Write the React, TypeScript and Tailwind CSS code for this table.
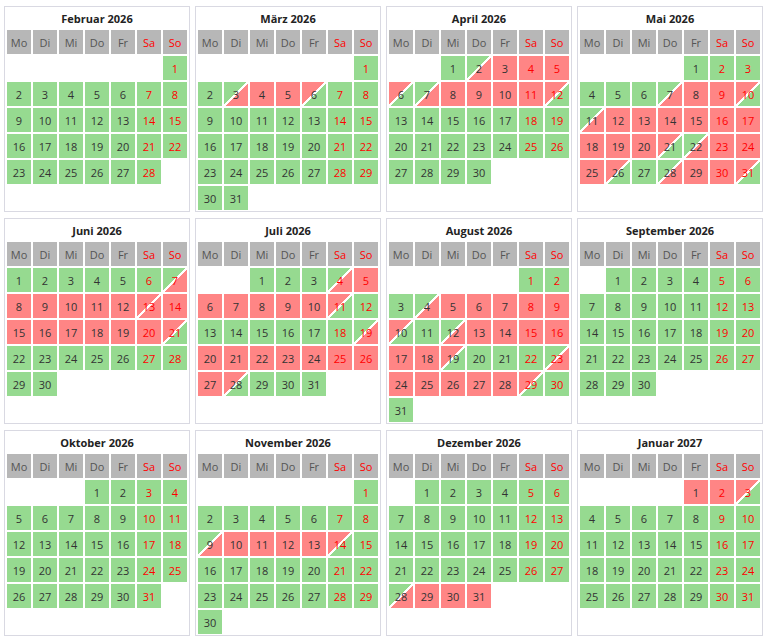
import React from "react";

// Belegungsplan: Aufenthalte als [Anreise, Abreise)
const stays: [string, string][] = [
  ["2026-03-03", "2026-03-06"],
  ["2026-04-02", "2026-04-06"],
  ["2026-04-07", "2026-04-12"],
  ["2026-05-07", "2026-05-10"],
  ["2026-05-11", "2026-05-21"],
  ["2026-05-22", "2026-05-26"],
  ["2026-05-28", "2026-05-31"],
  ["2026-06-07", "2026-06-13"],
  ["2026-06-13", "2026-06-21"],
  ["2026-07-04", "2026-07-11"],
  ["2026-07-19", "2026-07-28"],
  ["2026-08-04", "2026-08-10"],
  ["2026-08-12", "2026-08-19"],
  ["2026-08-23", "2026-08-29"],
  ["2026-11-09", "2026-11-14"],
  ["2026-12-28", "2027-01-03"],
];

const MONTH_NAMES = [
  "Januar", "Februar", "März", "April", "Mai", "Juni",
  "Juli", "August", "September", "Oktober", "November", "Dezember",
];
const WEEKDAYS = ["Mo", "Di", "Mi", "Do", "Fr", "Sa", "So"];

type DayState = "free" | "booked" | "arrival" | "departure" | "change";

// Hintergrund je Zustand
const STATE_BG: Record<DayState, string> = {
  free: "bg-[#96da90]",
  booked: "bg-[#ff8585]",
  arrival:
    "bg-[linear-gradient(to_bottom_right,#96da90_46%,#ffffff_46%,#ffffff_54%,#ff8585_54%)]",
  departure:
    "bg-[linear-gradient(to_bottom_right,#ff8585_46%,#ffffff_46%,#ffffff_54%,#96da90_54%)]",
  change:
    "bg-[linear-gradient(to_bottom_right,#ff8585_46%,#ffffff_46%,#ffffff_54%,#ff8585_54%)]",
};

function iso(y: number, m: number, d: number) {
  const dt = new Date(y, m, d);
  const mm = String(dt.getMonth() + 1).padStart(2, "0");
  const dd = String(dt.getDate()).padStart(2, "0");
  return `${dt.getFullYear()}-${mm}-${dd}`;
}

function getState(y: number, m: number, d: number): DayState {
  const day = iso(y, m, d);
  const isStart = stays.some(([s]) => s === day);
  const isEnd = stays.some(([, e]) => e === day);
  const nightBooked = stays.some(([s, e]) => day >= s && day < e);
  const morningBooked = stays.some(([s, e]) => day > s && day <= e);
  if (isStart && isEnd) return "change";
  if (nightBooked && morningBooked) return "booked";
  if (nightBooked) return "arrival";
  if (morningBooked) return "departure";
  return "free";
}

function MonthCard({ year, month }: { year: number; month: number }) {
  const offset = (new Date(year, month, 1).getDay() + 6) % 7;
  const days = new Date(year, month + 1, 0).getDate();
  const cells: (number | null)[] = [
    ...Array.from({ length: offset }, () => null),
    ...Array.from({ length: days }, (_, i) => i + 1),
  ];

  return (
    <div className="h-[206px] w-[186px] border border-[#d9d9e2] bg-white px-[2px]">
      <div className="flex h-[23px] items-center justify-center pt-[2px] text-[11px] font-bold text-[#222]">
        {MONTH_NAMES[month]} {year}
      </div>
      <div className="grid grid-cols-[repeat(7,24px)] auto-rows-[24px] gap-[2px] text-[11px] leading-none">
        {WEEKDAYS.map((w, i) => (
          <div
            key={w}
            className={`flex items-center justify-center bg-[#b7b7b7] ${
              i >= 5 ? "text-[#f00]" : "text-[#555]"
            }`}
          >
            {w}
          </div>
        ))}
        {cells.map((d, i) => {
          if (d === null) return <div key={`e${i}`} />;
          const weekend = i % 7 >= 5;
          return (
            <div
              key={d}
              className={`flex items-center justify-center ${STATE_BG[getState(year, month, d)]} ${
                weekend ? "text-[#f00]" : "text-[#333]"
              }`}
            >
              {d}
            </div>
          );
        })}
      </div>
    </div>
  );
}

export default function App() {
  const months = Array.from({ length: 12 }, (_, i) => {
    const m = 1 + i;
    return { year: 2026 + Math.floor(m / 12), month: m % 12 };
  });

  return (
    <div className="min-h-screen bg-white pl-[4px] pt-[6px] font-['Open_Sans',sans-serif]">
      <div className="grid grid-cols-[repeat(4,186px)] gap-x-[5px] gap-y-[6px]">
        {months.map((m) => (
          <MonthCard key={`${m.year}-${m.month}`} year={m.year} month={m.month} />
        ))}
      </div>
    </div>
  );
}
